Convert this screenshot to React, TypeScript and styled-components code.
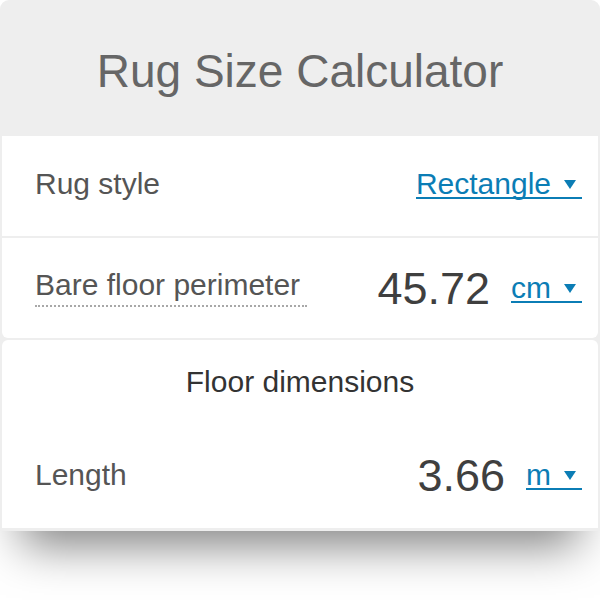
import React from "react";
import styled, { createGlobalStyle } from "styled-components";

const GlobalStyle = createGlobalStyle`
  html, body {
    margin: 0;
    padding: 0;
    background: #ffffff;
  }

  body {
    font-family: "Liberation Sans", Arial, sans-serif;
  }
`;

const Page = styled.div`
  width: 600px;
  height: 600px;
  overflow: hidden;
  background: #ffffff;
`;

const Widget = styled.div`
  width: 600px;
  box-sizing: border-box;
  background: #eeeeee;
  border-radius: 9px 9px 0 0;
  padding: 0 2px 3px;

  display: flex;
  flex-direction: column;
  gap: 2px;

  box-shadow: 0 36px 44px -22px rgba(0, 0, 0, 0.5);
`;

const Header = styled.div`
  height: 134px;
  box-sizing: border-box;
  padding-top: 48px;
  text-align: center;
`;

const Title = styled.h1`
  margin: 0;
  font-size: 46px;
  line-height: 46px;
  font-weight: normal;
  color: #666666;
`;

type CardProps = {
  $shape: "top" | "bottom";
};

const Card = styled.div<CardProps>`
  background: #ffffff;
  display: flex;
  flex-direction: column;
  border-radius: ${(props) =>
    props.$shape === "top" ? "0 0 6px 6px" : "6px 6px 0 0"};
`;

type RowProps = {
  $height: number;
  $divider?: boolean;
};

const Row = styled.div<RowProps>`
  height: ${(props) => props.$height}px;
  box-sizing: border-box;
  padding: 0 16px 0 33px;

  display: flex;
  align-items: center;

  ${(props) =>
    props.$divider
      ? "border-bottom: 2px solid #eeeeee; padding-bottom: 4px;"
      : ""}
`;

const Label = styled.span<{ $hint?: boolean }>`
  font-size: 30px;
  line-height: 30px;
  color: #555555;

  ${(props) =>
    props.$hint
      ? `
    padding: 0 7px 5px 0;
    border-bottom: 2px dotted #a8a8a8;
  `
      : ""}
`;

const Right = styled.div`
  margin-left: auto;
  display: flex;
  align-items: center;
  gap: 21px;
`;

const Value = styled.span`
  font-size: 45px;
  line-height: 45px;
  color: #3f3f3f;
`;

const Unit = styled.span`
  display: inline-flex;
  align-items: center;
  gap: 13px;

  font-size: 30px;
  line-height: 27px;
  color: #0b7db5;

  padding-right: 6px;
  border-bottom: 2px solid #0b7db5;
`;

const Caret = styled.svg`
  width: 12px;
  height: 9px;
  fill: #0b7db5;
  margin-top: 2px;
`;

const SubHeading = styled.div`
  height: 82px;
  display: flex;
  align-items: center;
  justify-content: center;

  font-size: 30px;
  color: #333333;
  padding-top: 2px;
  box-sizing: border-box;
`;

const Dropdown: React.FC<{ text: string }> = ({ text }) => (
  <Unit>
    {text}
    <Caret viewBox="0 0 12 9">
      <polygon points="0,0 12,0 6,9" />
    </Caret>
  </Unit>
);

const App: React.FC = () => {
  return (
    <Page>
      <GlobalStyle />
      <Widget>
        <Header>
          <Title>Rug Size Calculator</Title>
        </Header>

        <Card $shape="top">
          <Row $height={102} $divider>
            <Label>Rug style</Label>
            <Right>
              <Dropdown text="Rectangle" />
            </Right>
          </Row>
          <Row $height={100}>
            <Label $hint>Bare floor perimeter</Label>
            <Right>
              <Value>45.72</Value>
              <Dropdown text="cm" />
            </Right>
          </Row>
        </Card>

        <Card $shape="bottom">
          <SubHeading>Floor dimensions</SubHeading>
          <Row $height={106}>
            <Label>Length</Label>
            <Right>
              <Value>3.66</Value>
              <Dropdown text="m" />
            </Right>
          </Row>
        </Card>
      </Widget>
    </Page>
  );
};

export default App;
